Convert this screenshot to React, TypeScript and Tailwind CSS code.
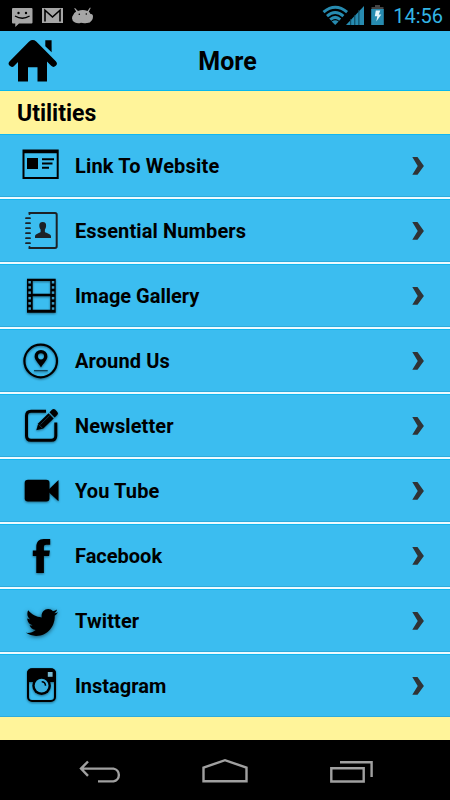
import type { ReactNode } from 'react'
import { FaTwitter } from 'react-icons/fa'

interface MenuItem {
  label: string
  tracking: string
  icon: ReactNode
}

const shadow = 'drop-shadow-[0_1px_1px_rgba(0,0,0,0.45)]'

function WebsiteIcon() {
  return (
    <svg viewBox="0 0 40 40" className="h-10 w-10">
      <path fillRule="evenodd" d="M2.5 3.500h36.200v29.500H2.500zM4.500 7.300v23.700h32.200V7.300z" />
      <rect x="7" y="12" width="11" height="11" />
      <path d="M22 13.200h12M22 17.500h10.500M22 21.800h7" stroke="#000" strokeWidth="2" />
    </svg>
  )
}

function ContactsIcon() {
  return (
    <svg viewBox="0 0 40 40" className="h-10 w-10">
      <g stroke="#1d2226" fill="none" strokeWidth="2" strokeLinecap="round">
        <path d="M9.500 3V2H35q1.700 0 1.700 1.700v31.600Q36.700 37 35 37H9.500V36" />
        <path d="M6 7.200h4M6 12.200h4M6 17.200h4M6 22.200h4M6 27.200h4M6 32.200h4" strokeWidth="1.800" />
      </g>
      <path
        fill="#1d2226"
        d="M22.700 11c2.500 0 3.600 1.500 3.400 4-.1 1.900-.9 2.700-1.200 3.600v2.400c1.500 1.400 6.100 1.500 6.100 4.500v1.500H15v-1.500c0-3 4.500-3.100 5.600-4.500v-2.400c-.4-.9-1.200-1.700-1.300-3.600-.2-2.500.9-4 3.400-4z"
      />
    </svg>
  )
}

function FilmIcon() {
  const holes = [5, 10.2, 15.4, 20.9, 26.1, 31.3]
  return (
    <svg viewBox="0 0 40 40" className={`h-10 w-10 ${shadow}`}>
      <path fillRule="evenodd" d="M7 2.700h28.700v34H7zM12.700 4.900v12.900h17.600V4.900zM12.700 20.300v13.400h17.600V20.300z" />
      {holes.map((y) => (
        <g key={y} fill="#3a9cc6">
          <rect x="8.400" y={y} width="2.500" height="2.500" />
          <rect x="31.800" y={y} width="2.500" height="2.500" />
        </g>
      ))}
    </svg>
  )
}

function PinIcon() {
  return (
    <svg viewBox="0 0 40 40" className={`h-10 w-10 ${shadow}`}>
      <circle cx="20.700" cy="20" r="16.300" fill="none" stroke="#000" strokeWidth="2.200" />
      <path
        fillRule="evenodd"
        d="M21 9a6.400 6.400 0 0 1 6.400 6.400c0 3.400-3.700 6.400-6.400 11-2.700-4.600-6.400-7.600-6.400-11A6.400 6.400 0 0 1 21 9zM21 12.200a3.100 3.100 0 1 0 0 6.200 3.100 3.100 0 0 0 0-6.200z"
      />
      <path d="M14 29.700h13.700" stroke="#0c3a50" strokeWidth="1.200" />
    </svg>
  )
}

function ComposeIcon() {
  return (
    <svg viewBox="0 0 40 40" className={`h-10 w-10 ${shadow}`}>
      <path d="M26 5.200H11q-4.500 0-4.500 4.500v20q0 4.500 4.500 4.500h20.300q4.500 0 4.500-4.500V16.500" fill="none" stroke="#000" strokeWidth="3" />
      <path d="M16.300 24.200l2-7L28.500 7.200l5.200 5.200L23.300 22.500z" />
      <path d="M29.500 6.200l2.700-2.700q1.500-1.200 2.900.1l2.300 2.300q1.200 1.400 0 2.800l-2.700 2.700z" />
      <path d="M20.500 18.500l9-8.800" stroke="#2d7fa3" strokeWidth=".4" />
      <path d="M18.500 18.300l3.700 3.700" stroke="#236783" strokeWidth=".6" />
    </svg>
  )
}

function VideoIcon() {
  return (
    <svg viewBox="0 0 40 40" className={`h-10 w-10 ${shadow}`}>
      <rect x="4.700" y="8.800" width="24.800" height="21.800" rx="3.300" />
      <path d="M29 18.200L38.500 9v21.300L29 21.500z" />
    </svg>
  )
}

function FacebookIcon() {
  return (
    <svg viewBox="0 0 40 40" className={`h-10 w-10 ${shadow}`}>
      <path d="M16.300 37V20h-3.500v-5.600h3.500v-3.200C16.300 5.800 18.800 3 23.800 3h6.400v5.700h-3.900c-1.900 0-2.400.8-2.400 2.500v3.200h6l-.8 5.600h-5.200v17z" />
    </svg>
  )
}

function TwitterIcon() {
  return (
    <div className="flex h-10 w-10 items-center justify-center">
      <FaTwitter
        preserveAspectRatio="none"
        className="relative left-[2px] top-[1px] h-[33px] w-8 text-black drop-shadow-[0_1px_2px_rgba(0,0,0,0.6)]"
      />
    </div>
  )
}

function InstagramIcon() {
  return (
    <svg viewBox="0 0 40 40" className={`h-10 w-10 ${shadow}`}>
      <rect x="8" y="3.300" width="27" height="31.700" rx="4" fill="none" stroke="#000" strokeWidth="2" />
      <path d="M7.200 16V7q0-4.500 4.500-4.500h19.600q4.500 0 4.500 4.500v9z" />
      <circle cx="21.600" cy="19.700" r="9.300" />
      <circle cx="21.600" cy="19.700" r="6.900" fill="#3ab0df" />
      <path d="M21.700 15.700q3.600 0 3.800 4" fill="none" stroke="#000" strokeWidth="1.600" />
      <rect x="27.800" y="6" width="4.800" height="4.800" fill="#78b8d0" />
    </svg>
  )
}

const items: MenuItem[] = [
  { label: 'Link To Website', tracking: 'tracking-[0.17px]', icon: <WebsiteIcon /> },
  { label: 'Essential Numbers', tracking: 'tracking-[0.12px]', icon: <ContactsIcon /> },
  { label: 'Image Gallery', tracking: 'tracking-normal', icon: <FilmIcon /> },
  { label: 'Around Us', tracking: 'tracking-[0.12px]', icon: <PinIcon /> },
  { label: 'Newsletter', tracking: 'tracking-[0.1px]', icon: <ComposeIcon /> },
  { label: 'You Tube', tracking: 'tracking-[0.1px]', icon: <VideoIcon /> },
  { label: 'Facebook', tracking: 'tracking-normal', icon: <FacebookIcon /> },
  { label: 'Twitter', tracking: 'tracking-[0.1px]', icon: <TwitterIcon /> },
  { label: 'Instagram', tracking: 'tracking-normal', icon: <InstagramIcon /> },
]

function StatusBar() {
  return (
    <div className="flex h-[31px] shrink-0 items-start bg-black">
      <svg viewBox="0 0 100 31" className="h-[31px] w-[100px]">
        <path fill="#a6a6a6" d="M13 8h18.500q1 0 1 1v13.500q0 1-1 1H19L15.300 27v-3.500H13q-1 0-1-1V9q0-1 1-1z" />
        <circle cx="18.500" cy="13" r="1.200" />
        <circle cx="26" cy="13" r="1.200" />
        <path d="M15 16q7.300 4.500 14.600 0" fill="none" stroke="#000" strokeWidth="1.300" />
        <rect x="42" y="8" width="21" height="15" fill="#a6a6a6" />
        <path d="M45 21.500V10.200l7.500 6.800 7.500-6.800v11.300" fill="none" stroke="#000" strokeWidth="1.600" />
        <path
          fill="#a6a6a6"
          d="M75 8l3 3q4.700-2 9.500 0L90 7.500l.7.500-1.900 3.700q1.300 1 1.700 2.300 2.500-.5 2.500 2.800 0 2.200-1.300 3.800-1.700 2.700-5 2.500-3.200.5-5.700-.3-3 1.200-6-.2-3-1.500-3-4.300 0-2.100 1.200-3.300.8-2 3-3.400L74.200 8.500z"
        />
        <circle cx="79.300" cy="14.300" r=".8" />
        <circle cx="86.300" cy="14" r=".8" />
      </svg>
      <div className="flex-1" />
      <svg viewBox="0 0 70 31" className="h-[31px] w-[70px]">
        <g fill="none" stroke="#278bb0" strokeWidth="3">
          <path d="M3.500 12.100q11.800-9.600 23.600 0" />
          <path d="M7 16.100q8.200-7.200 16.400 0" />
          <path d="M10.200 19.700q5-4.600 10 0" />
        </g>
        <path d="M11.700 21.600q3.600-2.500 6.900 0L15.200 25z" fill="#278bb0" />
        <path d="M26 25L44 6v19z" fill="#278bb0" />
        <path d="M30.700 19v6M34.800 15v10M38.900 10v15" stroke="#0b4054" strokeWidth="1" />
        <path d="M55 5h5v2h3.500v3h-12V7H55z" fill="#444" />
        <rect x="51.200" y="9" width="12.600" height="16" fill="#278bb0" />
        <path d="M55.800 10.500h4.500l-1.500 4h2.500L56.300 21.500l1-5.300h-2.500z" fill="#e4f4fa" />
      </svg>
      <span className="w-[60px] pr-[7px] pt-[2px] text-right text-[20px] leading-7 text-[#33b5e5]">14:56</span>
    </div>
  )
}

function Header() {
  return (
    <header className="grid h-[60px] shrink-0 grid-cols-[70px_1fr_70px] border-b border-[#08b7ed] bg-[#3bbdf0]">
      <svg viewBox="0 0 70 60" className="h-[60px] w-[70px]">
        <path
          d="M12 32.500L31.200 13q1.500-1.200 3 0L53.500 32.500"
          stroke="#000"
          strokeWidth="6.500"
          strokeLinecap="round"
          strokeLinejoin="round"
          fill="none"
        />
        <path d="M18 28L32.500 13 47 28v22.500h-9.500V36.300H28v14.200H18z" />
        <path d="M45.300 9.300h6.300v12l-6.300-6z" />
      </svg>
      <h1 className="pl-[5px] pt-[1px] text-center text-[25px] font-bold leading-[60px]">More</h1>
    </header>
  )
}

function MenuRow({ item }: { item: MenuItem }) {
  return (
    <li className="box-content flex h-[61px] items-start border-y border-t-[#12b7f0] border-b-[#2fabdc] bg-[#3bbdf0] pl-5">
      <div className="mt-[11px] h-10 w-10 shrink-0">{item.icon}</div>
      <span className={`ml-[15px] flex-1 text-[20px] font-bold leading-[63px] ${item.tracking}`}>{item.label}</span>
      <svg viewBox="0 0 14 20" className="mr-[25px] mt-[21px] h-5 w-[14px]">
        <path d="M1.300 1h5.200l6.400 8.900-6.400 8.900H1.300l5.400-8.900z" fill="#303336" />
      </svg>
    </li>
  )
}

function NavBar() {
  return (
    <nav className="flex h-[60px] shrink-0 items-center justify-center bg-black">
      <svg viewBox="0 0 330 60" className="h-[60px] w-[330px]" fill="none" stroke="#a0a0a0" strokeWidth="2.400">
        <path d="M28 21.500L21 28.600l7 7.200M21 28.600h32.500a6.500 6.500 0 0 1 0 12.800H38" />
        <path d="M143.500 27.600L165 20.200l21.500 7.400v13.700h-43z" />
        <path d="M271.300 28.300h32.400v13.200h-32.400zM280 22.300h31.600v14.600" />
      </svg>
    </nav>
  )
}

export default function App() {
  return (
    <div className="flex h-[800px] w-[450px] flex-col overflow-hidden bg-[#fff49a] font-[Roboto,sans-serif] text-black">
      <StatusBar />
      <Header />
      <h2 className="h-[43px] shrink-0 pl-[17px] text-[23px] font-bold leading-[46px]">Utilities</h2>
      <ul className="flex flex-col gap-[2px] bg-[#eefaff]">
        {items.map((item) => (
          <MenuRow key={item.label} item={item} />
        ))}
      </ul>
      <div className="flex-1" />
      <NavBar />
    </div>
  )
}
